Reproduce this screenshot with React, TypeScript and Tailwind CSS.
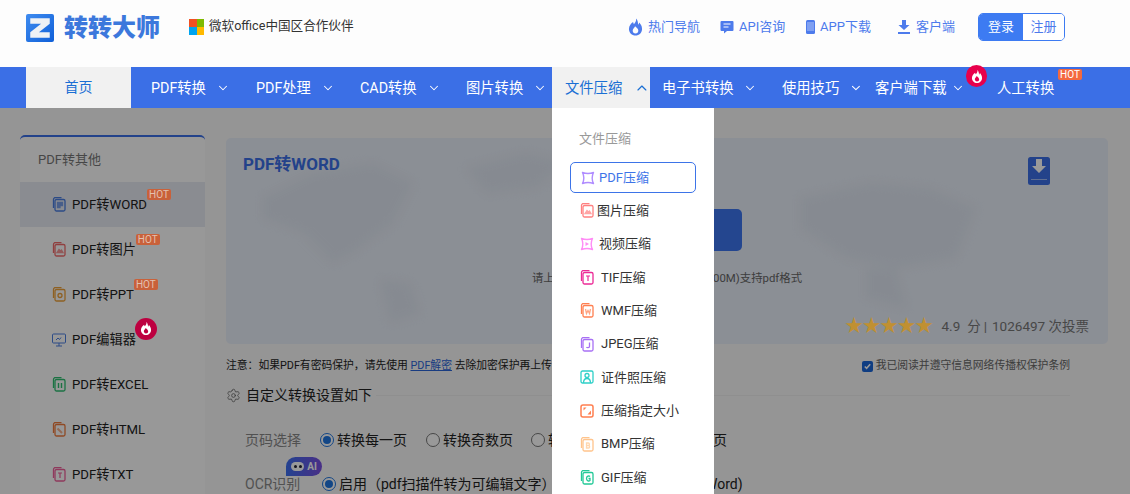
import { ChevronDown, ChevronUp, Settings } from "lucide-react";

const navItems = [
  { label: "PDF转换", w: "w-[105px]", pl: "pl-5", gap: "gap-[10px]" },
  { label: "PDF处理", w: "w-[104px]", pl: "pl-5", gap: "gap-[10px]" },
  { label: "CAD转换", w: "w-[106px]", pl: "pl-5", gap: "gap-[10px]" },
  { label: "图片转换", w: "w-[106px]", pl: "pl-5", gap: "gap-[10px]" },
];

const navRight = [
  { label: "电子书转换", w: "w-[120px]", gap: "gap-[10px]" },
  { label: "使用技巧", w: "w-[93px]", gap: "gap-[10px]" },
  { label: "客户端下载", w: "w-[122px]", gap: "gap-[5px]" },
];

const sideItems = [
  { label: "PDF转WORD", color: "#4a7de0", badge: "hot", glyph: "lines", active: true },
  { label: "PDF转图片", color: "#f06a6a", badge: "hot", glyph: "image" },
  { label: "PDF转PPT", color: "#eda03a", badge: "hot", glyph: "circle" },
  { label: "PDF编辑器", color: "#4a7de0", badge: "fire", glyph: "monitor" },
  { label: "PDF转EXCEL", color: "#2fbf71", glyph: "bars" },
  { label: "PDF转HTML", color: "#ee7a3c", glyph: "clip" },
  { label: "PDF转TXT", color: "#ee5f9a", glyph: "t" },
];

const dropItems = [
  { label: "PDF压缩", color: "#b08cff", kind: "pinch", ml: "ml-[4px]", active: true },
  { label: "图片压缩", color: "#ff8080", kind: "image", ml: "ml-[3px]" },
  { label: "视频压缩", color: "#ff8cf5", kind: "play", ml: "ml-[5px]" },
  { label: "TIF压缩", color: "#ec2a96", kind: "t", ml: "ml-[7px]" },
  { label: "WMF压缩", color: "#ff7f50", kind: "w", ml: "ml-[7px]" },
  { label: "JPEG压缩", color: "#a870f5", kind: "j", ml: "ml-[7px]" },
  { label: "证件照压缩", color: "#2fd0c8", kind: "person", ml: "ml-[7px]" },
  { label: "压缩指定大小", color: "#ff7f50", kind: "size", ml: "ml-[7px]" },
  { label: "BMP压缩", color: "#ffc48c", kind: "b", ml: "ml-[7px]" },
  { label: "GIF压缩", color: "#22c997", kind: "g", ml: "ml-[7px]" },
];

function Flame({ className }: { className?: string }) {
  return (
    <svg viewBox="0 0 16 18" className={className} fill="currentColor">
      <path d="M8.600 0c.5 3-1 4.400-2.300 6C5.800 5.300 5.500 4.500 5.400 3.700 3 5.300 1 8 1 11c0 3.900 3.100 7 7 7s7-3.100 7-7c0-3.500-1.800-5.300-3-6.800-.2 1-.6 1.700-1.200 2.300C10.700 4 10.300 1.700 8.600 0zM8 15.800c-1.700 0-3-1.200-3-2.900 0-1.800 1.600-2.700 2.600-4.600 1.400 1.500 3.400 2.700 3.400 4.700 0 1.600-1.300 2.800-3 2.800z" />
    </svg>
  );
}

function FireBadge({ className }: { className: string }) {
  return (
    <span className={`absolute flex items-center justify-center rounded-full text-white ${className}`}>
      <Flame className="h-[13px] w-[12px]" />
    </span>
  );
}

function HotBadge({ className }: { className: string }) {
  return (
    <span className={`absolute rounded-[2px] px-[2px] text-[10px] leading-[11px] ${className}`}>
      HOT
    </span>
  );
}

function Glyph({ kind, color }: { kind: string; color: string }) {
  if (kind === "lines") return <path d="M5.500 6h5v3h-2.500v2h-2.500z" fill={color} opacity={0.7} />;
  if (kind === "image" ) return <path d="M5 11l2-3 1.500 1.500 1-1 1.500 2.500z" fill={color} opacity={0.7} />;
  if (kind === "circle") return <circle cx="8" cy="9" r="2" fill="none" stroke={color} />;
  if (kind === "bars") return <path d="M6.500 6.500v5M9.500 6.500v5" stroke={color} strokeWidth="1.400" />;
  if (kind === "clip") return <path d="M5.500 7l4.500 4.500" stroke={color} strokeWidth="2" opacity={0.6} />;
  if (kind === "t") return <path d="M6 6.500h4M8 6.500v5" stroke={color} strokeWidth="1.200" fill="none" />;
  if (kind === "w") return <path d="M5.500 6.500l1 4.500 1.500-3 1.500 3 1-4.500" stroke={color} fill="none" opacity={0.7} />;
  if (kind === "j") return <path d="M9.500 6v4c0 1.500-2.500 1.500-3 .5" stroke={color} fill="none" />;
  if (kind === "b") return <path d="M6.500 6.500v5h2c1.500 0 1.500-2.500 0-2.500h-2 2c1.200 0 1.200-2.500 0-2.500z" stroke={color} fill="none" opacity={0.7} />;
  if (kind === "g") return <path d="M10 7c-1-1-3.500-.5-3.500 2s2.500 3 3.500 2V9H8.500" stroke={color} fill="none" />;
  return null;
}

// stacked document icon, the sidebar and the dropdown both use it
function DocIcon({ color, kind }: { color: string; kind: string }) {
  if (kind === "monitor") {
    return (
      <svg viewBox="0 0 14 14" className="h-[14px] w-[14px] shrink-0" fill="none" stroke={color}>
        <rect x="0.500" y="1" width="13" height="9" rx="1" />
        <path d="M7 10v3M4 13h6M4 7l2-2 1.500 1.500L9 4.500" />
      </svg>
    );
  }
  if (kind === "pinch" || kind === "play") {
    return (
      <svg viewBox="0 0 14 14" className="h-[14px] w-[14px] shrink-0" fill="none" stroke={color} strokeWidth="1.400" strokeLinejoin="round">
        <path d="M1.500 1.500C5 2.800 9 2.800 12.500 1.500 10.800 5 10.800 9 12.500 12.500 9 11.200 5 11.200 1.500 12.500 3.200 9 3.200 5 1.500 1.500z" />
        {kind === "play" && <path d="M5.500 5l3.500 2-3.500 2z" fill={color} stroke="none" />}
      </svg>
    );
  }
  if (kind === "size") {
    return (
      <svg viewBox="0 0 14 14" className="h-[14px] w-[14px] shrink-0" fill="none" stroke={color} strokeWidth="1.500">
        <rect x="1" y="1" width="12" height="12" rx="2" />
        <path d="M7.500 10.500h3.500v-4z" fill={color} stroke="none" />
        <path d="M3.500 3.500h3l-3 3z" fill={color} stroke="none" />
      </svg>
    );
  }
  if (kind === "person") {
    return (
      <svg viewBox="0 0 14 14" className="h-[14px] w-[14px] shrink-0" fill="none" stroke={color} strokeWidth="1.300">
        <rect x="1" y="1" width="12" height="12" rx="1.500" />
        <circle cx="7" cy="5.500" r="2" />
        <path d="M3.500 13c0-3 1.500-4.500 3.500-4.500s3.500 1.500 3.500 4.500" />
      </svg>
    );
  }
  return (
    <svg viewBox="0 0 14 15" className="h-[15px] w-[14px] shrink-0" fill="none" stroke={color} strokeWidth="1.300">
      <path d="M1.500 11V2.500a2 2 0 0 1 2-2h6" />
      <rect x="3" y="2.500" width="10" height="11.500" rx="1.500" />
      <g transform="translate(0 -0.500)">
        <Glyph kind={kind} color={color} />
      </g>
    </svg>
  );
}

function Radio({ checked }: { checked?: boolean }) {
  return (
    <span
      className={`flex h-[14px] w-[14px] shrink-0 items-center justify-center rounded-full border ${
        checked ? "border-[#1f75e0]" : "border-[#777]"
      } bg-white`}
    >
      {checked && <span className="h-2 w-2 rounded-full bg-[#1f75e0]" />}
    </span>
  );
}

function RadioLabel({ text, checked, className }: { text: string; checked?: boolean; className: string }) {
  return (
    <label className={`flex items-center gap-[3px] ${className}`}>
      <Radio checked={checked} />
      <span className="whitespace-nowrap">{text}</span>
    </label>
  );
}

export default function App() {
  return (
    <div className="relative h-[494px] w-[1130px] overflow-hidden bg-[#f8f8f8] font-['Roboto','Noto_Sans_CJK_SC',sans-serif] text-[14px] text-[#222]">
      {/* header */}
      <header className="flex h-[67px] items-start bg-[#fdfdfd] pl-[26px] pr-[65px]">
        <div className="mt-[14px] flex h-[28px] w-[28px] items-center justify-center rounded-[2px] bg-[linear-gradient(135deg,#3f8cf0,#0f5fd8)]">
          <svg viewBox="0 0 24 24" className="h-[26px] w-[26px]">
            <path d="M3 3h18v5L11 16h10v5H3v-5L13 8H3z" fill="#eef1f5" />
          </svg>
        </div>
        <span className="ml-[10px] mt-[10px] text-[24px] leading-[36px] font-black text-[#3c78dc]">转转大师</span>
        <div className="ml-[29px] mt-[19px] grid h-[16px] w-[15px] grid-cols-2 grid-rows-2">
          <span className="bg-[#f25022]" />
          <span className="bg-[#7fba00]" />
          <span className="bg-[#00a4ef]" />
          <span className="bg-[#ffb900]" />
        </div>
        <span className="ml-[5px] mt-[17px] text-[12.600px] leading-[18px] text-[#333]">微软office中国区合作伙伴</span>

        <nav className="ml-auto mt-[18px] flex h-[18px] items-center text-[13px] text-[#4d7bec]">
          <Flame className="h-[18px] w-[15px] text-[#4d7bec]" />
          <span className="ml-[5px] w-[52px] whitespace-nowrap">热门导航</span>
          <svg viewBox="0 0 14 14" className="ml-[20px] h-[14px] w-[14px]" fill="#4d7bec">
            <path d="M1.500 1h11a1 1 0 0 1 1 1v8a1 1 0 0 1-1 1H7l-3 2.500V11H1.500a1 1 0 0 1-1-1V2a1 1 0 0 1 1-1z" />
            <path d="M3.500 4h7M3.500 7h5" stroke="#fff" />
          </svg>
          <span className="ml-[5px] w-[46px] whitespace-nowrap">API咨询</span>
          <svg viewBox="0 0 9 14" className="ml-[21px] h-[14px] w-[9px]" fill="#4d7bec">
            <rect width="9" height="14" rx="1.500" />
            <path d="M1 2h7v9H1z" fill="#7fa0f2" />
          </svg>
          <span className="ml-[5px] w-[50px] whitespace-nowrap">APP下载</span>
          <svg viewBox="0 0 14 14" className="ml-[27px] h-[14px] w-[14px]" fill="#4d7bec">
            <path d="M5 0h4v5h3.500L7 10 1.500 5H5zM1 12h12v2H1z" />
          </svg>
          <span className="ml-[5px] w-[38px] whitespace-nowrap">客户端</span>
        </nav>

        <div className="ml-[24px] mt-[13px] flex h-[28px] w-[87px] overflow-hidden rounded-[5px] border border-[#3d7bf2] text-[13px]">
          <span className="flex w-[44px] items-center justify-center bg-[#3d7bf2] text-white">登录</span>
          <span className="flex flex-1 items-center justify-center bg-white text-[#4d7bec]">注册</span>
        </div>
      </header>

      {/* main nav */}
      <div className="relative flex h-[41px] items-center bg-[#3b6fe6] pl-[26px] text-[14.300px] text-white">
        <div className="flex h-full w-[105px] items-center justify-center bg-[#f1f1f1] text-[14px] text-[#1a6fd4]">首页</div>
        {navItems.map((item) => (
          <div key={item.label} className={`flex h-full items-center ${item.w} ${item.pl} ${item.gap}`}>
            <span className="mt-[2px] whitespace-nowrap">{item.label}</span>
            <ChevronDown className="h-[14px] w-[14px]" strokeWidth={1.8} />
          </div>
        ))}

        <div className="relative flex h-full w-[98px] items-center gap-[12px] bg-[#f1f1f1] pl-[13px] text-[#1a6fd4]">
          <span className="mt-[2px] whitespace-nowrap">文件压缩</span>
          <ChevronUp className="h-[18px] w-[18px]" strokeWidth={1.8} />

          {/* open dropdown, lies over the dimmed page */}
          <div className="absolute left-0 top-[41px] z-20 h-[386px] w-[162px] bg-white px-[18px] pt-[21px] text-[13px] text-[#333]">
            <div className="pl-[9px] leading-[20px] text-[#999]">文件压缩</div>
            <ul className="mt-[12px]">
              {dropItems.map((item) => (
                <li key={item.label} className="flex h-[33.300px] w-[126px] items-center">
                  <div
                    className={`flex h-[31px] w-full items-center rounded-[5px] pl-[10px] ${
                      item.active ? "border border-[#3d74e8] pl-[9px] text-[#3d74e8]" : ""
                    }`}
                  >
                    <DocIcon color={item.color} kind={item.kind} />
                    <span className={`whitespace-nowrap ${item.ml}`}>{item.label}</span>
                  </div>
                </li>
              ))}
            </ul>
          </div>
        </div>

        {navRight.map((item) => (
          <div key={item.label} className={`flex h-full items-center pl-3 ${item.w} ${item.gap}`}>
            <span className="mt-[2px] whitespace-nowrap">{item.label}</span>
            <ChevronDown className="h-[14px] w-[14px]" strokeWidth={1.8} />
          </div>
        ))}
        <div className="mt-[2px] pl-3 whitespace-nowrap">人工转换</div>
        <FireBadge className="left-[966px] top-[-2px] z-10 h-[22px] w-[21px] bg-[#e8004c]" />
        <HotBadge className="left-[1058px] top-[2px] bg-[#f4693f] text-white" />
      </div>

      {/* page content */}
      <div className="flex items-start pl-5">
        <aside className="mt-[27px] w-[185px] shrink-0 rounded-t-[5px] border-t-2 border-[#3b6fe6] bg-[#fefefe]">
          <div className="h-[45px] pl-[18px] pt-[13px] text-[13px] leading-[20px] text-[#777]">PDF转其他</div>
          <ul className="text-[13.200px]">
            {sideItems.map((item) => (
              <li
                key={item.label}
                className={`flex h-[45px] items-center gap-[6px] pl-[32px] ${item.active ? "bg-[#e6e9f2]" : ""}`}
              >
                <DocIcon color={item.color} kind={item.glyph} />
                <span className="relative whitespace-nowrap">
                  {item.label}
                  {item.badge === "hot" && (
                    <HotBadge className="left-full top-[-6px] z-20 bg-[#c9613a] text-[#e3c0b0]" />
                  )}
                  {item.badge === "fire" && (
                    <FireBadge className="left-full top-[-12px] z-20 -ml-px h-[22px] w-[22px] bg-[#bd0040] text-[#e8c8d0]" />
                  )}
                </span>
              </li>
            ))}
          </ul>
        </aside>

        <main className="ml-[21px] mt-[30px] w-[882px] shrink-0">
          <section className="relative h-[206px] overflow-hidden rounded-[5px] bg-[#e8eef8]">
            {/* faint world map behind the upload box */}
            <svg viewBox="0 0 882 206" className="absolute inset-0 h-full w-full blur-[4px]" fill="#e0e7f2">
              <path d="M37 60l50-25 60-10 40 20-20 40-40 30-20 10-30-30-40-15z" />
              <path d="M154 142l30 3 10 30-30 10z" />
              <path d="M574 60l70-15 60 5 46 20-20 50-60 10-50-10-46-30z" />
              <path d="M640 130l30 0 10 40-40-10z" />
              <path d="M240 30l60-15 40 10-30 25-50 5z" />
            </svg>
            <h1 className="absolute left-[17px] top-[13px] text-[17px] leading-[26px] font-bold text-[#3b6fe6]">PDF转WORD</h1>
            <svg viewBox="0 0 22 28" className="absolute left-[802px] top-[19px] h-[28px] w-[22px]">
              <rect width="22" height="28" rx="2.500" fill="#3b6fe6" />
              <path d="M8 2h6v7h4l-7 7-7-7h4z" fill="#fff" />
              <path d="M3 22.500h16" stroke="#9fb8f2" />
            </svg>
            <div className="relative flex flex-col items-center pt-[71px]">
              <div className="h-[42px] w-[150px] rounded-[5px] bg-[#3c75ee]" />
              <p className="mt-[18px] text-[11.400px] leading-[18px] text-[#666]">请上传需要转换的文件(大小不超过100M)支持pdf格式</p>
            </div>
            <div className="absolute right-[19px] top-[178px] flex items-center text-[13.500px] leading-[20px] text-[#777]">
              <span className="relative z-20 text-[18px] leading-[20px] tracking-[-0.500px] text-[#c09032]">★★★★★</span>
              <span className="ml-[9px]">4.9</span>
              <span className="ml-[7px]">分</span>
              <span className="ml-[3px]">|</span>
              <span className="ml-[5px] whitespace-nowrap">1026497 次投票</span>
            </div>
          </section>

          <div className="mt-[13px] flex items-center justify-between pr-[38px] text-[10.800px] leading-[18px]">
            <p className="whitespace-nowrap">
              注意：如果PDF有密码保护，请先使用 <span className="text-[#2b64d8] underline">PDF解密</span> 去除加密保护再上传
            </p>
            <label className="flex items-center gap-[3px] text-[#666]">
              <span className="flex h-[11px] w-[11px] items-center justify-center rounded-[2px] bg-[#1a66d9]">
                <svg viewBox="0 0 10 10" className="h-[9px] w-[9px]" fill="none" stroke="#fff" strokeWidth="1.800">
                  <path d="M2 5l2 2 4-4.500" />
                </svg>
              </span>
              <span className="whitespace-nowrap">我已阅读并遵守信息网络传播权保护条例</span>
            </label>
          </div>

          <div className="mt-[9px] flex h-[22px] items-center pr-[38px]">
            <Settings className="h-[15px] w-[15px] text-[#666]" strokeWidth={1.3} />
            <span className="ml-[5px] whitespace-nowrap">自定义转换设置如下</span>
            <span className="ml-[4px] h-px flex-1 bg-[#eee]" />
          </div>

          <div className="mt-[24px] flex h-[20px] items-center pl-[19px]">
            <span className="w-[75px] text-[#888]">页码选择</span>
            <RadioLabel text="转换每一页" checked className="w-[106px]" />
            <RadioLabel text="转换奇数页" className="w-[105px]" />
            <RadioLabel text="转换偶数页" className="w-[109px]" />
            <RadioLabel text="转换指定页" className="" />
          </div>

          <div className="relative mt-[24px] flex h-[20px] items-center pl-[19px]">
            <span className="absolute left-[60px] top-[-17px] flex h-[19px] w-[36px] items-center justify-center gap-[3px] rounded-t-[10px] rounded-br-[10px] bg-[linear-gradient(90deg,#3b6ff0,#7a4fe0)] text-[10px] font-bold leading-none text-white">
              <span className="flex h-[9px] w-[13px] items-center justify-center gap-[2px] rounded-full bg-white">
                <span className="h-[3px] w-[3px] rounded-full bg-[#223]" />
                <span className="h-[3px] w-[3px] rounded-full bg-[#223]" />
              </span>
              AI
            </span>
            <span className="w-[77px] text-[#888]">OCR识别</span>
            <RadioLabel text="启用（pdf扫描件转为可编辑文字）" checked className="w-[300px]" />
            <span className="ml-[13px] whitespace-nowrap">禁用（转为Word)</span>
          </div>
        </main>
      </div>

      {/* modal dim, starts under the nav */}
      <div className="absolute inset-x-0 bottom-0 top-[108px] z-10 bg-black/40" />
    </div>
  );
}
